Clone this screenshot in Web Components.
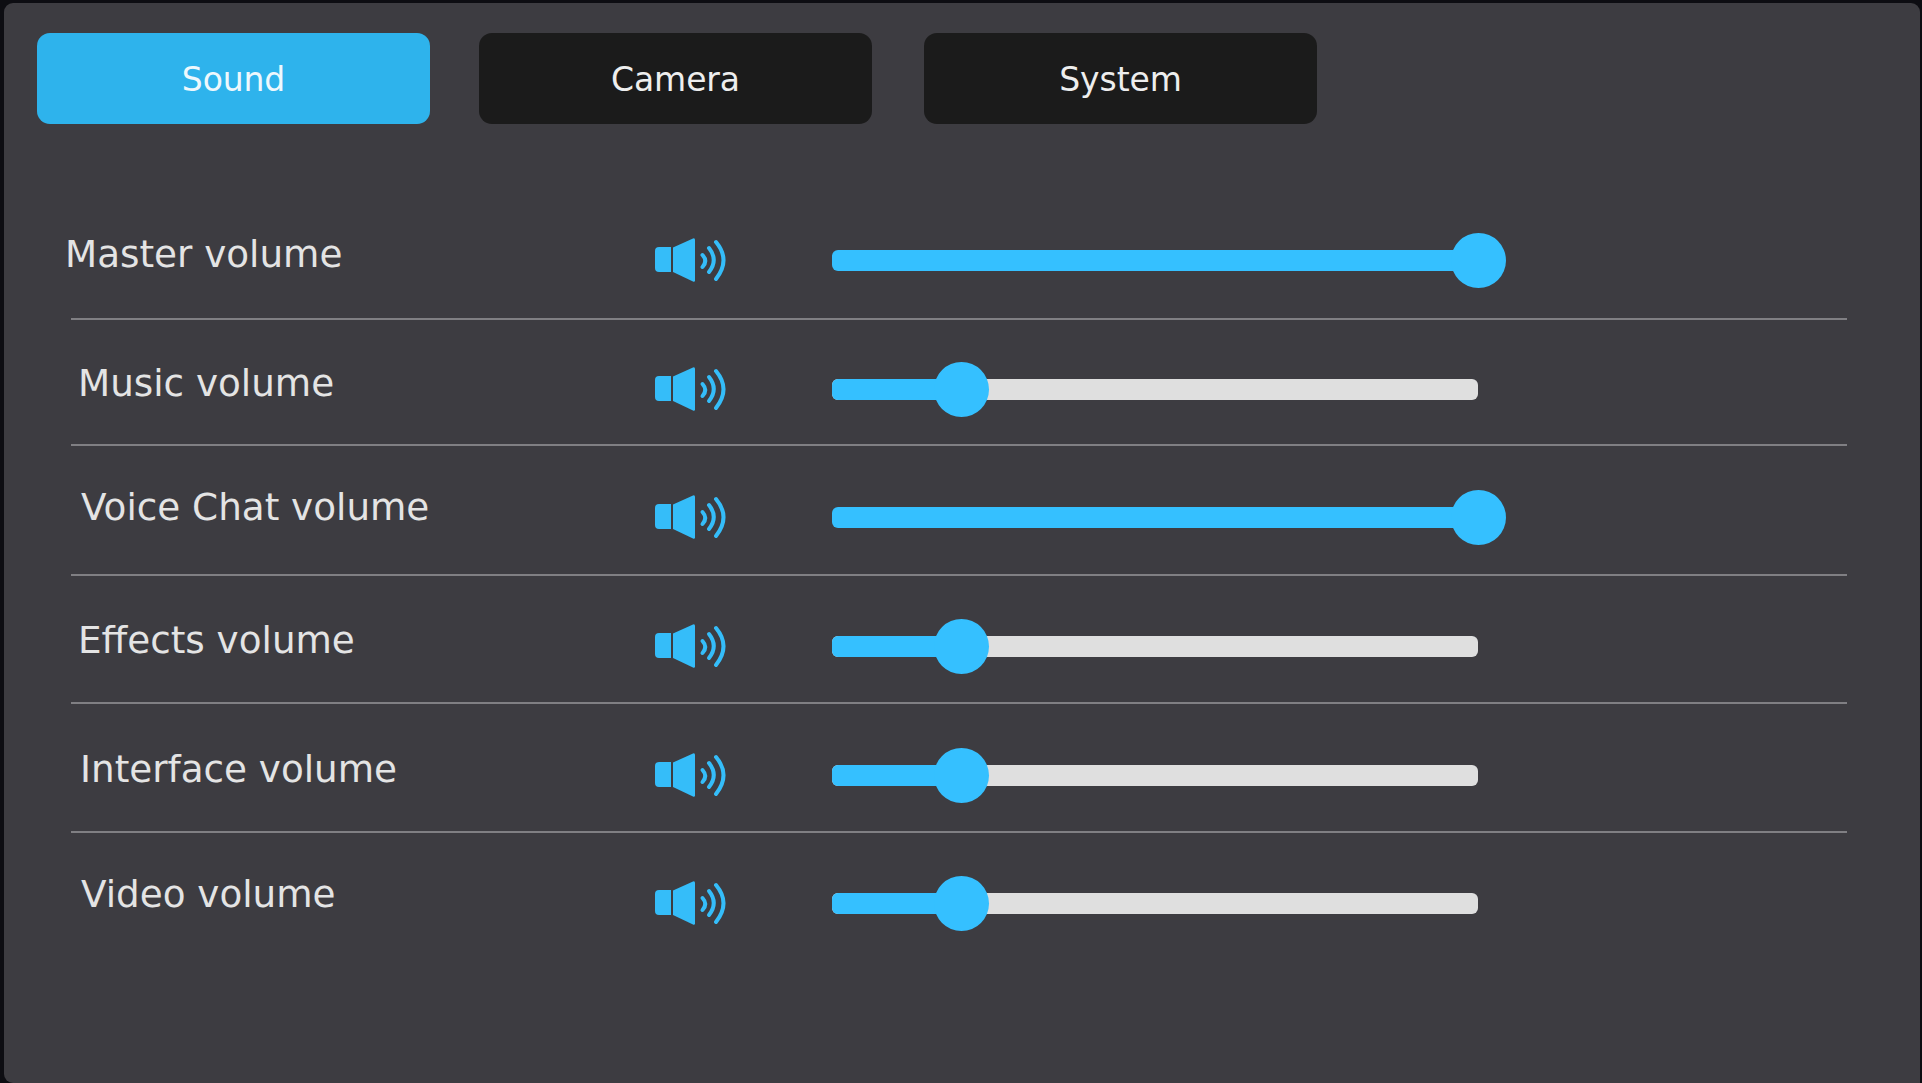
<!DOCTYPE html>
<html lang="en">
<head>
<meta charset="utf-8">
<title>Sound settings</title>
<style>
    html, body {
        margin: 0;
        height: 100%;
        background: #0d0d12;
        overflow: hidden;
    }
</style>
</head>
<body>
<settings-panel>
    <tab-bar slot="tabs">
        <tab-button active>Sound</tab-button>
        <tab-button>Camera</tab-button>
        <tab-button style="margin-left: 3px">System</tab-button>
    </tab-bar>
    <volume-row style="--row-h: 134px; --mid: 74px; --indent: -6px; --lift: 6px" value="100">Master volume</volume-row>
    <volume-row style="--row-h: 126px; --mid: 69px; --indent: 7px; --lift: 6px" value="20">Music volume</volume-row>
    <volume-row style="--row-h: 130px; --mid: 71px; --indent: 10px; --lift: 10px" value="100">Voice Chat volume</volume-row>
    <volume-row style="--row-h: 128px; --mid: 70px; --indent: 7px; --lift: 6px" value="20">Effects volume</volume-row>
    <volume-row style="--row-h: 129px; --mid: 71px; --indent: 9px; --lift: 6px" value="20">Interface volume</volume-row>
    <volume-row style="--row-h: 128px; --mid: 70px; --indent: 10px; --lift: 9px" value="20" last>Video volume</volume-row>
</settings-panel>

<script>
class SettingsPanel extends HTMLElement {
    connectedCallback() {
        this.attachShadow({ mode: 'open' });
        this.shadowRoot.innerHTML = `
            <style>
                :host {
                    display: block;
                    box-sizing: border-box;
                    height: 1080px;
                    margin: 3px 2px 0 4px;
                    background: #3d3c41;
                    border-radius: 9px 9px 0 9px;
                    font-family: "DejaVu Sans", sans-serif;
                }
                .tabs {
                    padding: 30px 0 0 33px;
                }
                .rows {
                    padding: 62px 73px 0 67px;
                }
            </style>
            <div class="tabs"><slot name="tabs"></slot></div>
            <div class="rows"><slot></slot></div>
        `;
    }
}

class TabBar extends HTMLElement {
    connectedCallback() {
        this.attachShadow({ mode: 'open' });
        this.shadowRoot.innerHTML = `
            <style>
                :host {
                    display: flex;
                    gap: 49px;
                }
            </style>
            <slot></slot>
        `;
    }
}

class TabButton extends HTMLElement {
    connectedCallback() {
        this.attachShadow({ mode: 'open' });
        this.shadowRoot.innerHTML = `
            <style>
                :host {
                    display: flex;
                    align-items: center;
                    justify-content: center;
                    box-sizing: border-box;
                    width: 393px;
                    height: 91px;
                    padding-top: 1px;
                    border-radius: 13px;
                    background: #1b1b1b;
                    color: #eeeeee;
                    font-size: 33px;
                    letter-spacing: -.1px;
                }
                :host([active]) {
                    background: #2eb3ec;
                    color: #eef8fd;
                }
            </style>
            <slot></slot>
        `;
    }
}

class VolumeIcon extends HTMLElement {
    connectedCallback() {
        this.attachShadow({ mode: 'open' });
        this.shadowRoot.innerHTML = `
            <style>
                :host {
                    display: block;
                    width: 72px;
                    height: 44px;
                }
                svg {
                    display: block;
                }
            </style>
            <svg width="72" height="44" viewBox="0 0 72 44">
                <path fill="#35bdf9" d="M4 9h12v25H4a4 4 0 0 1-4-4V13a4 4 0 0 1 4-4z"/>
                <path fill="#35bdf9" d="M18 9.500 38 .4A1.500 1.500 0 0 1 40 1.800v40.400a1.500 1.500 0 0 1-2 1.400L18 34z"/>
                <g fill="none" stroke="#35bdf9" stroke-width="4" stroke-linecap="round">
                    <path d="M47.500 17Q53 23 47.500 29"/>
                    <path d="M54 10Q63.500 22 54 34"/>
                    <path d="M61 4Q76 22 61 41"/>
                </g>
            </svg>
        `;
    }
}

class VolumeSlider extends HTMLElement {
    connectedCallback() {
        const value = Number(this.getAttribute('value') || 0);
        this.attachShadow({ mode: 'open' });
        this.shadowRoot.innerHTML = `
            <style>
                :host {
                    display: block;
                    position: relative;
                    width: 646px;
                    height: 54px;
                }
                .track {
                    position: absolute;
                    left: 0;
                    right: 0;
                    top: 17px;
                    height: 21px;
                    border-radius: 6px;
                    background: #dfdfdf;
                    overflow: hidden;
                }
                .fill {
                    height: 100%;
                    background: #35c0ff;
                }
                .thumb {
                    position: absolute;
                    top: 0;
                    width: 55px;
                    height: 55px;
                    margin-left: -27px;
                    border-radius: 50%;
                    background: #35c0ff;
                }
            </style>
            <div class="track"><div class="fill" style="width: ${value}%"></div></div>
            <div class="thumb" style="left: ${value}%"></div>
        `;
    }
}

class VolumeRow extends HTMLElement {
    connectedCallback() {
        const value = this.getAttribute('value');
        this.attachShadow({ mode: 'open' });
        this.shadowRoot.innerHTML = `
            <style>
                :host {
                    display: block;
                    box-sizing: border-box;
                    height: var(--row-h);
                    padding-top: calc(var(--mid) - 27px);
                    border-bottom: 2px solid #807f83;
                }
                :host([last]) {
                    border-bottom: none;
                }
                .row {
                    display: grid;
                    grid-template-columns: 584px 177px 646px;
                    grid-template-rows: 54px;
                    align-items: center;
                }
                .label {
                    margin-left: var(--indent);
                    margin-bottom: calc(var(--lift) * 2);
                    color: #e4e4e4;
                    font-size: 37.3px;
                    white-space: nowrap;
                }
            </style>
            <div class="row">
                <div class="label"><slot></slot></div>
                <volume-icon></volume-icon>
                <volume-slider value="${value}"></volume-slider>
            </div>
        `;
    }
}

customElements.define('settings-panel', SettingsPanel);
customElements.define('tab-bar', TabBar);
customElements.define('tab-button', TabButton);
customElements.define('volume-icon', VolumeIcon);
customElements.define('volume-slider', VolumeSlider);
customElements.define('volume-row', VolumeRow);
</script>
</body>
</html>
